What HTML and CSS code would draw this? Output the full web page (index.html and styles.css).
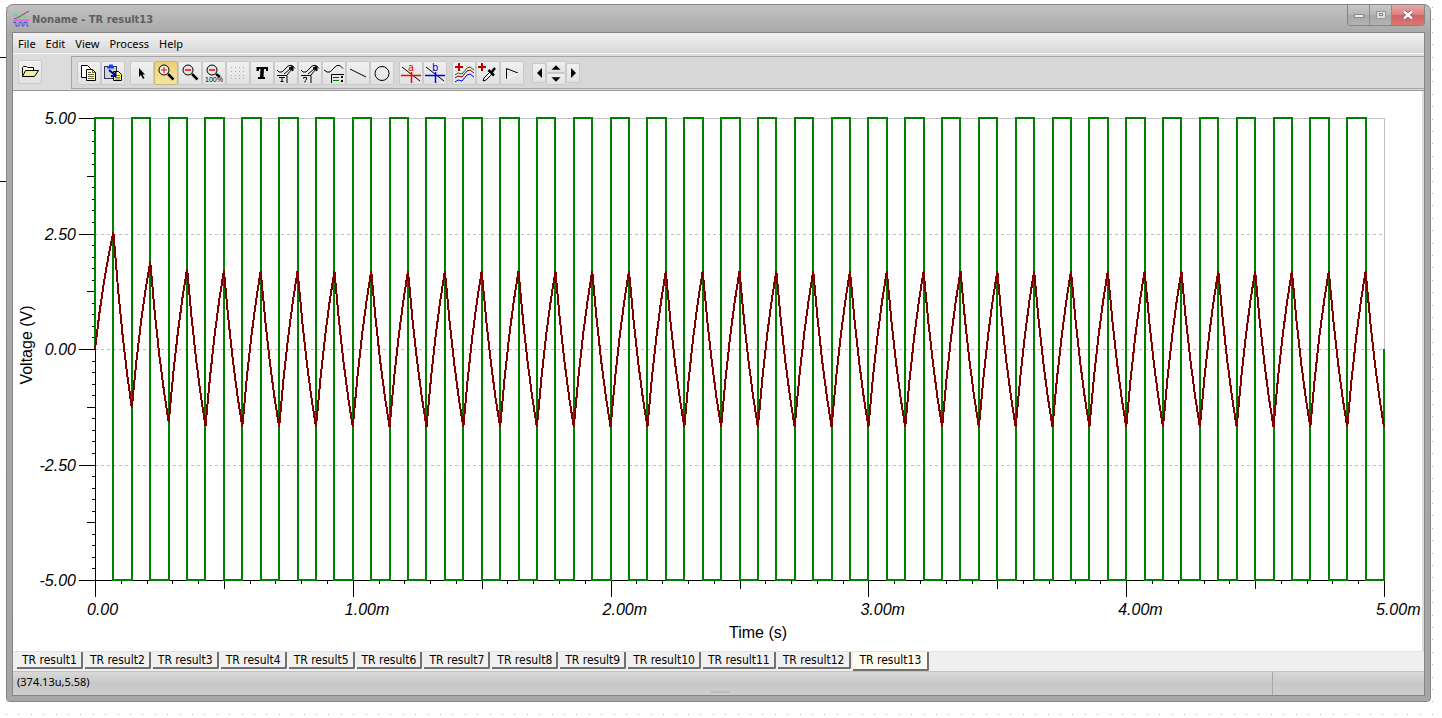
FILE: index.html
```html
<!DOCTYPE html>
<html lang="en">
<head>
  <meta charset="UTF-8">
  <meta name="viewport" content="width=device-width, initial-scale=1.0">
  <title>Noname - TR result13</title>
  <link rel="stylesheet" href="styles.css">
</head>
<body>
  <!-- Schematic grid behind the window -->
  <svg class="desktop" aria-hidden="true">
    <path id="dots" stroke="#b4b4b4"/>
    <path d="M0 57.5H7M0 181.5H7" stroke="#300000"/>
  </svg>

  <div class="window">
    <header class="titlebar">
      <svg class="app-icon" width="16" height="16" viewBox="0 0 16 16" fill="none">
        <path d="M0 5l3-2 4 4 3-4 3 5" stroke="#5fe070" stroke-width="1.500"/>
        <path d="M1 8L6 6l3-2 7-4" stroke="#7d4a85"/>
        <path d="M0 9.500H16" stroke="#e060e0" stroke-width="2"/>
        <path d="M0 11.500h3V15h3v-3.500h3V15h2v-3.500h3V15h2" stroke="#4a55e0"/>
      </svg>
      <h1 class="title">Noname - TR result13</h1>
      <div class="window-buttons">
        <button class="win-btn" aria-label="Minimize"><svg width="12" height="12"><rect x="1.500" y="5.500" width="9" height="3" fill="#eee" stroke="#888"/></svg></button>
        <button class="win-btn" aria-label="Maximize"><svg width="12" height="12" fill="none"><rect x="1.500" y="2.500" width="9" height="7" fill="#ddd" stroke="#999"/><rect x="4.500" y="4.500" width="3" height="2" stroke="#888"/></svg></button>
        <button class="win-btn close" aria-label="Close"><svg width="12" height="12"><path d="M2 2.500l8 7M10 2.500l-8 7" stroke="#8d4a4a" stroke-width="4"/><path d="M2 2.500l8 7M10 2.500l-8 7" stroke="#fff" stroke-width="2.500"/></svg></button>
      </div>
    </header>

    <div class="client">
      <nav class="menubar">
        <a href="#">File</a>
        <a href="#">Edit</a>
        <a href="#">View</a>
        <a href="#">Process</a>
        <a href="#">Help</a>
      </nav>

      <div class="toolbar">
        <div class="file-tools">
          <button class="tool" aria-label="Open"><svg viewBox="0 0 20 20"><path d="M2.500 14.500v-9l1-1h3l1 1h6v3" fill="#ffffd0" stroke="#000"/><path d="M2.500 14.500l3-6h13l-4 6z" fill="#f2ee9a" stroke="#000"/></svg></button>
        </div>
        <div class="tools">
          <div class="group">
            <button class="tool" aria-label="Copy"><svg viewBox="0 0 20 20"><path d="M2.500 2.500h6l3 3v9h-9z" fill="#fff" stroke="#000"/><path d="M7.500 6.500h6l3 3v8h-9z" fill="#ffffa8" stroke="#000"/><path d="M13.500 6.500v3h3M9 9.500h3M9 11.500h6M9 13.500h6M9 15.500h6" stroke="#000" stroke-width=".6" fill="none"/></svg></button>
            <button class="tool" aria-label="Paste"><svg viewBox="0 0 20 20"><rect x="1.500" y="3.500" width="12" height="12" fill="#d4d4d4" stroke="#333360"/><path d="M4 4.500h7M6 2.500h4" stroke="#0048ff" stroke-width="2"/><path d="M10.500 8.500h5l3 3v6h-8z" fill="#ffff80" stroke="#000"/><path d="M12 12.500h5M12 14.500h5M12 16h5" stroke="#777"/><path d="M6 7l6 5M12.500 8v5H8" stroke="#000090" stroke-width="2" fill="none"/></svg></button>
          </div>
          <div class="group">
            <button class="tool" aria-label="Select"><svg viewBox="0 0 20 20"><path d="M7 5v9l2-2 2 4 1.500-1-2-3.500H13z" fill="#000"/></svg></button>
            <button class="tool active" aria-label="Zoom in"><svg viewBox="0 0 20 20"><circle cx="8" cy="7" r="5" fill="#eee" stroke="#000"/><path d="M5 7h6M8 4v6" stroke="#f00"/><path d="M12 11l5.500 5.500" stroke="#000" stroke-width="2.500"/></svg></button>
            <button class="tool" aria-label="Zoom out"><svg viewBox="0 0 20 20"><circle cx="8" cy="7" r="5" fill="#e4e4e4" stroke="#000"/><path d="M5 7h6" stroke="#f00" stroke-width="1.500"/><path d="M12 11l5.500 5.500" stroke="#000" stroke-width="2.500"/></svg></button>
            <button class="tool" aria-label="Zoom 100%"><svg viewBox="0 0 20 20"><circle cx="8" cy="7" r="5" fill="#e4e4e4" stroke="#000"/><path d="M5 7h6" stroke="#f00" stroke-width="1.500"/><path d="M12 11l4 3" stroke="#000" stroke-width="2.500"/><text x="1" y="19" class="tiny">100%</text></svg></button>
            <button class="tool" aria-label="Grid" disabled><svg viewBox="0 0 20 20"><path d="M3 4.500h14M3 8.500h14M3 12.500h14M3 15.500h14" stroke="#aaa" stroke-dasharray="1 3"/></svg></button>
            <button class="tool" aria-label="Text"><svg viewBox="0 0 20 20"><path d="M4.500 4H16v4h-2V6h-2l-.5 8H13v2H6v-2h2l.5-8H7v2H4.500z" fill="#000"/></svg></button>
            <button class="tool" aria-label="Text pointer"><svg viewBox="0 0 20 20" fill="none" stroke="#000"><path d="M1 7l2 2h3l5-5 2-1.500h3l3 3M8 11l6-5M1 12.500h10V20M11 12l5-6M3 14.500h6M6 14.500v4M4.500 18.500h3"/><path d="M17 3v5l-4-3z" fill="#000"/></svg></button>
            <button class="tool" aria-label="Value pointer"><svg viewBox="0 0 20 20" fill="none" stroke="#000"><path d="M1 7l2 2h3l5-5 2-1.500h3l3 3M8 11l6-5M1 12.500h10V20M11 12l5-6M3.500 15.500v-1h3v2l-1.500 1M5 18v1.500"/><path d="M17 3v5l-4-3z" fill="#000"/></svg></button>
            <button class="tool" aria-label="Legend"><svg viewBox="0 0 20 20" fill="none" stroke="#000"><path d="M0 7l3 2h3l5-5 2-1.500h3l3 3M7.500 20v-8.500H20"/><path d="M9 14.500h6" stroke="#a00000"/><path d="M9 17.500h6" stroke="#008000"/><path d="M17 13l2 2M19 13l-2 2M17 17l2 2M19 17l-2 2"/></svg></button>
            <button class="tool" aria-label="Line"><svg viewBox="0 0 20 20"><path d="M2 6l16 8" stroke="#000"/></svg></button>
            <button class="tool" aria-label="Ellipse"><svg viewBox="0 0 20 20"><circle cx="10" cy="10.500" r="7" fill="none" stroke="#000"/></svg></button>
          </div>
          <div class="group">
            <button class="tool" aria-label="Cursor a"><svg viewBox="0 0 20 20"><path d="M1 4l18 14" stroke="#000"/><path d="M0 12.500h20M10.500 9v11" stroke="#f00" stroke-width="1.500"/><text x="7" y="8" class="letter" fill="#f00">a</text></svg></button>
            <button class="tool" aria-label="Cursor b"><svg viewBox="0 0 20 20"><path d="M1 4l18 14" stroke="#000"/><path d="M0 12.500h20M10.500 9v11" stroke="#00f" stroke-width="1.500"/><text x="7" y="8" class="letter" fill="#00f">b</text></svg></button>
          </div>
          <div class="group">
            <button class="tool" aria-label="Add curves"><svg viewBox="0 0 20 20" fill="none"><path d="M1 4h8M5 0v8" stroke="#c00000" stroke-width="2"/><path d="M1 12l3-2 4 1 5-6 3-1 4 3" stroke="#008000"/><path d="M1 15l3-2 4 1 5-6 3-1 4 3" stroke="#800000"/><path d="M1 19l3-2 4 1 5-6 3-1 4 3" stroke="#00f"/></svg></button>
            <button class="tool" aria-label="Pick curve"><svg viewBox="0 0 20 20"><path d="M0 4h8M4 0v8" stroke="#c00000" stroke-width="2"/><path d="M5 18l1-3 6-6 2 2-6 6z" fill="#fff" stroke="#000"/><path d="M10.500 7l5.500 5.500M13 10l4-5" stroke="#000" stroke-width="2.500"/></svg></button>
            <button class="tool" aria-label="Marker"><svg viewBox="0 0 20 20" fill="none"><path d="M4.500 16V5.500L16 10" stroke="#000"/><path d="M4.500 16L16 10.500" stroke="#fff"/></svg></button>
          </div>
          <div class="arrows">
            <button class="arrow tall" aria-label="Left"><svg viewBox="0 0 12 20"><path d="M9 5v10L4 10z"/></svg></button>
            <div class="arrow-pair">
              <button class="arrow wide" aria-label="Up"><svg viewBox="0 0 20 11"><path d="M5 8h10l-5-5z"/></svg></button>
              <button class="arrow wide" aria-label="Down"><svg viewBox="0 0 20 11"><path d="M5 3h10l-5 5z"/></svg></button>
            </div>
            <button class="arrow tall" aria-label="Right"><svg viewBox="0 0 12 20"><path d="M4 5v10l5-5z"/></svg></button>
          </div>
        </div>
      </div>

      <main class="plot">
        <svg class="chart" viewBox="0 0 1411 560" role="img" aria-label="Transient result">
          <path id="grid" class="grid"/>
          <path class="border" d="M82 27.500H1371.500V489"/>
          <path id="axes" class="axis"/>
          <path id="square" class="square"/>
          <path id="ripple" class="ripple"/>
          <g id="labels" class="labels"></g>
          <text class="axis-title" x="745" y="547" text-anchor="middle">Time (s)</text>
          <text class="axis-title" transform="translate(19 254) rotate(-90)" text-anchor="middle">Voltage (V)</text>
        </svg>
      </main>

      <div class="tabs">
        <button class="tab">TR result1</button>
        <button class="tab">TR result2</button>
        <button class="tab">TR result3</button>
        <button class="tab">TR result4</button>
        <button class="tab">TR result5</button>
        <button class="tab">TR result6</button>
        <button class="tab">TR result7</button>
        <button class="tab">TR result8</button>
        <button class="tab">TR result9</button>
        <button class="tab">TR result10</button>
        <button class="tab">TR result11</button>
        <button class="tab">TR result12</button>
        <button class="tab selected">TR result13</button>
      </div>

      <footer class="statusbar">
        <span class="coords">(374.13u,5.58)</span>
        <span class="grip"></span>
        <span class="status-cell"></span>
      </footer>
    </div>
  </div>

  <script src="script.js"></script>
</body>
</html>
```
FILE: styles.css
```css
* {
  box-sizing: border-box;
}

body {
  margin: 0;
  min-height: 100vh;
  background: white;
  font-family: 'DejaVu Sans Condensed', 'DejaVu Sans', sans-serif;
  font-size: 12px;
  color: black;
  padding: 4px 11px 16px 6px;
  overflow: hidden;
}

button {
  font-family: inherit;
  font-size: inherit;
  color: inherit;
  padding: 0;
  margin: 0;
}

/* Dotted schematic grid */
.desktop {
  position: absolute;
  top: 0;
  left: 0;
  width: 100%;
  height: 100%;
  shape-rendering: crispEdges;
}

/* Window frame */
.window {
  position: relative;
  border: 1px solid #858585;
  border-radius: 7px 7px 4px 4px;
  background: linear-gradient(#c2c2c2, #a9a9a9 28px, #a6a6a6);
  padding: 0 5px 5px 5px;
}

.titlebar {
  display: flex;
  align-items: center;
  height: 27px;
}

.app-icon {
  margin-left: 1px;
}

.title {
  flex: 1;
  margin: 0 0 0 3px;
  padding-top: 2px;
  font-size: 11px;
  font-weight: bold;
  color: #606060;
}

.window-buttons {
  display: flex;
  align-self: flex-start;
  border: 1px solid #858585;
  border-top: 0;
  border-radius: 0 0 4px 4px;
  overflow: hidden;
}

.win-btn {
  display: flex;
  align-items: center;
  justify-content: center;
  width: 22px;
  height: 20px;
  border: 0;
  border-right: 1px solid #8e8e8e;
  background: linear-gradient(#c9c9c9, #b4b4b4 50%, #a8a8a8 50%, #b2b2b2);
}

.win-btn.close {
  width: 32px;
  border-right: 0;
  background: linear-gradient(#e8a8a8, #de8080 50%, #d06464 50%, #dc7474);
}

.client {
  border: 1px solid #858585;
  background: #d8d8d8;
}

/* Menu */
.menubar {
  display: flex;
  align-items: center;
  gap: 10px;
  height: 20px;
  padding-left: 5px;
  background: linear-gradient(#f2f2f2, #d8d8d8);
}

.menubar a {
  color: black;
  text-decoration: none;
}

.menubar,
.statusbar {
  font-family: 'Noto Sans', sans-serif;
  font-size: 11px;
}

/* Toolbar */
.toolbar {
  display: flex;
  height: 38px;
  border-top: 1px solid #f4f4f4;
  border-bottom: 1px solid #989898;
  background: #dcdcdc;
}

.file-tools {
  width: 58px;
  padding: 6px 5px;
}

.tools {
  flex: 1;
  display: flex;
  align-items: center;
  gap: 5px;
  margin: 2px 0 1px 0;
  padding: 1px 0 0 5px;
  border: 1px solid #a6a6a6;
  border-right: 0;
  background: #d7d7d7;
}

.group {
  display: flex;
}

.tool,
.arrow {
  display: flex;
  align-items: center;
  justify-content: center;
  border: 1px solid #cacaca;
  border-radius: 2px;
  background: linear-gradient(#f0f0f0, #e2e2e2);
}

.tool {
  width: 24px;
  height: 24px;
}

.tool svg {
  width: 20px;
  height: 20px;
  overflow: visible;
}

.tool.active {
  border-color: #c9b777;
  background: linear-gradient(#ecd272, #f5e3a0);
}

.tiny {
  font-family: 'Liberation Sans', sans-serif;
  font-size: 7px;
}

.letter {
  font-family: 'DejaVu Sans', sans-serif;
  font-size: 10px;
}

.arrows {
  display: flex;
  align-items: center;
  margin-left: 3px;
}

.arrow.tall {
  width: 14px;
  height: 20px;
}

.arrow.wide {
  width: 20px;
  height: 12px;
}

.arrow.tall svg {
  width: 12px;
  height: 20px;
}

.arrow.wide svg {
  width: 20px;
  height: 11px;
}

/* Chart */
.plot {
  background: white;
  border-right: 2px solid #dedede;
}

.chart {
  display: block;
  width: calc(100% + 2px);
  height: auto;
}

.chart path {
  fill: none;
  shape-rendering: crispEdges;
}

.grid {
  stroke: #c0c0c0;
  stroke-dasharray: 3 3;
}

.border {
  stroke: #c0c0c0;
}

.axis {
  stroke: black;
}

.square {
  stroke: #008000;
  stroke-width: 2;
}

.ripple {
  stroke: #800000;
  stroke-width: 2;
}

.labels,
.axis-title {
  font-family: 'Liberation Sans', Arial, sans-serif;
  font-size: 16px;
}

.labels {
  font-style: italic;
}

/* Result tabs */
.tabs {
  display: flex;
  align-items: flex-start;
  gap: 2px;
  height: 20px;
  padding-left: 4px;
  background: #efefef;
  border-top: 1px solid #e2e2e2;
}

.tab {
  height: 17px;
  padding: 0 4px 0 5px;
  border: 0;
  border-right: 2px solid #707070;
  border-bottom: 2px solid #707070;
  border-radius: 0 0 2px 0;
  background: #f0f0f0;
  white-space: nowrap;
}

.tab.selected {
  height: 19px;
  padding: 0 6px 2px 7px;
  background: #fffbf0;
}

/* Status bar */
.statusbar {
  display: flex;
  height: 24px;
  padding-left: 4px;
  border-top: 1px solid #c2c2c2;
  background: linear-gradient(#d8d8d8, #c8c8c8 50%, #cecece);
}

.coords {
  flex: 1;
  line-height: 20px;
}

.grip {
  align-self: flex-end;
  width: 19px;
  height: 2px;
  margin-bottom: 2px;
  background: #bcbcbc;
}

.status-cell {
  flex: 1;
  display: flex;
  justify-content: flex-end;
}

.status-cell::after {
  content: "";
  width: 151px;
  border-left: 1px solid #a8a8a8;
}
```
FILE: script.js
```js
// plot area inside the chart
const left = 82;
const top0 = 27;
const plotWidth = 1289;
const plotHeight = 462;
const zero = top0 + plotHeight / 2;
const perVolt = plotHeight / 10;
const halves = 70;

function set(id, d) {
  document.getElementById(id).setAttribute("d", d);
}

// background dots
let dots = "";
for (let y = 7; y < window.innerHeight; y += 12.4) {
  for (let x = 6; x < window.innerWidth; x += 12.4) {
    dots += `M${Math.round(x)} ${Math.round(y) + 0.5}h1`;
  }
}
set("dots", dots);

// grid lines
let grid = "";
[2.5, 0, -2.5].forEach(v => {
  grid += `M${left} ${Math.round(zero - v * perVolt) + 0.5}h${plotWidth}`;
});
set("grid", grid);

// axes with ticks
let axes = `M${left + 0.5} ${top0}V${top0 + plotHeight + 16}M${left} ${top0 + plotHeight + 0.5}h${plotWidth}`;
for (let i = 0; i <= 40; i++) {
  const size = i % 10 === 0 ? 16 : i % 5 === 0 ? 8 : 3;
  const y = Math.round(top0 + i * plotHeight / 40) + 0.5;
  axes += `M${left} ${y}h-${size}`;
}
for (let i = 0; i <= 50; i++) {
  const size = i % 10 === 0 ? 17 : i % 5 === 0 ? 9 : 4;
  const x = Math.round(left + i * plotWidth / 50) + 0.5;
  axes += `M${x} ${top0 + plotHeight}v${size}`;
}
set("axes", axes);

// square wave input
let square = `M${left} ${zero}V${top0}`;
for (let i = 1; i <= halves; i++) {
  const x = Math.round(left + i * plotWidth / halves);
  square += `H${x}V${i === halves ? zero : i % 2 ? top0 + plotHeight : top0}`;
}
set("square", square);

// RC response to the square wave
let ripple = `M${left} ${zero}`;
let v = 0;
for (let i = 0; i < halves; i++) {
  const target = i % 2 ? -5 : 5;
  for (let s = 1; s <= 4; s++) {
    const now = target + (v - target) * Math.pow(0.495, s / 4);
    const x = left + (i + s / 4) * plotWidth / halves;
    ripple += `L${x.toFixed(1)} ${(zero - now * perVolt).toFixed(1)}`;
  }
  v = target + (v - target) * 0.495;
}
set("ripple", ripple);

// axis labels
let labels = "";
["5.00", "2.50", "0.00", "-2.50", "-5.00"].forEach((t, i) => {
  labels += `<text x="${left - 19}" y="${top0 + 6 + i * plotHeight / 4}" text-anchor="end">${t}</text>`;
});
["0.00", "1.00m", "2.00m", "3.00m", "4.00m", "5.00m"].forEach((t, i) => {
  labels += `<text x="${left - 8 + i * plotWidth / 5}" y="${top0 + plotHeight + 35}">${t}</text>`;
});
document.getElementById("labels").innerHTML = labels;
```
